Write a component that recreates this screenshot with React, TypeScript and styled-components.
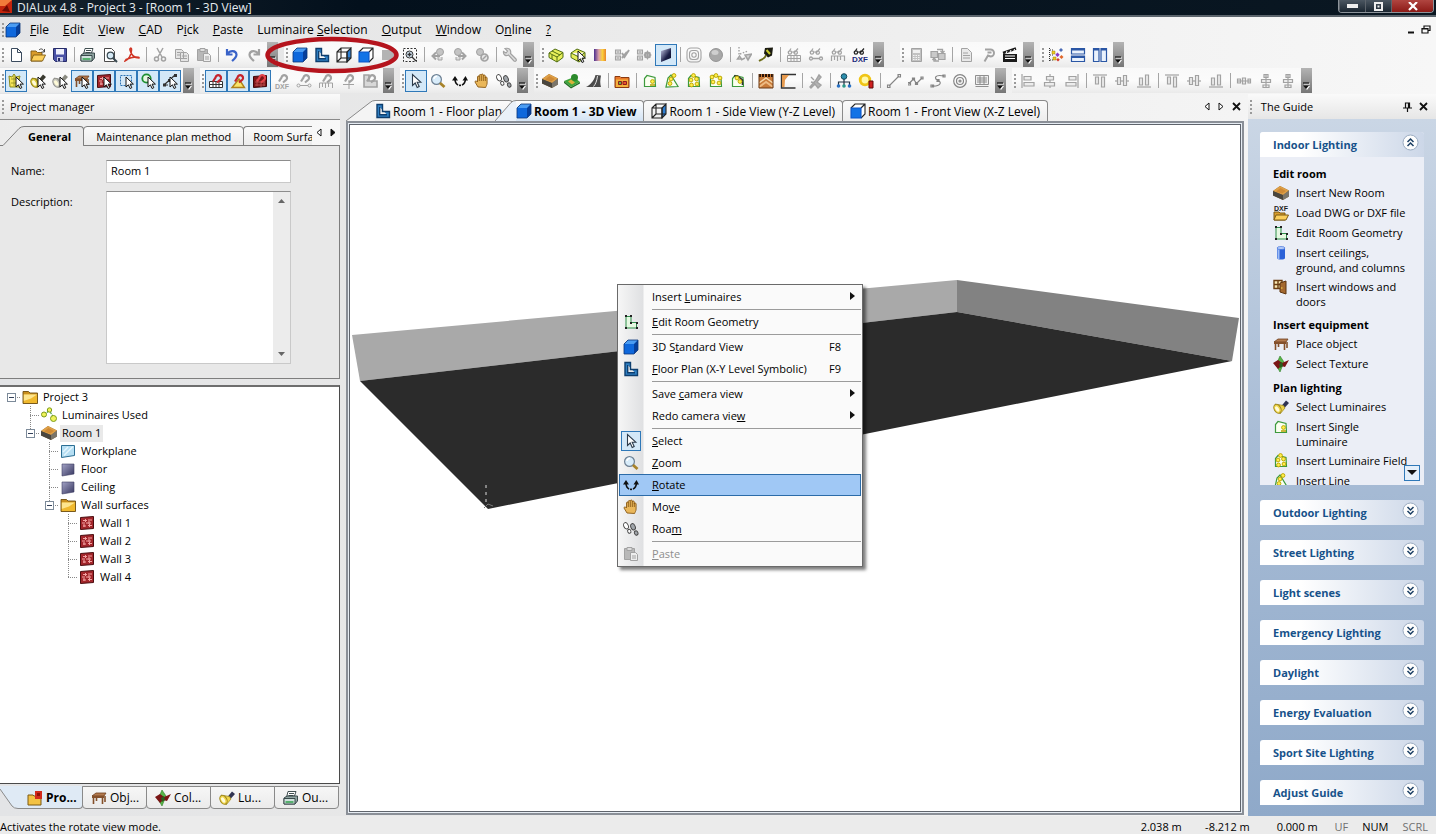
import React from "react";
import styled, { createGlobalStyle, css } from "styled-components";

const Global = createGlobalStyle`
  * { box-sizing: border-box; }
  body { margin: 0; background: #e8e8e8; }
  body, button, input, textarea {
    font-family: "Open Sans", "Noto Sans", sans-serif;
    font-size: 11px;
    line-height: 15px;
    color: #000;
  }
  button { padding: 0; border: 0; background: none; white-space: nowrap; }
  svg { display: block; flex: none; }
  u { text-underline-offset: 1px; }
`;

/* ---------- Icon drawings, all on a 16 x 16 grid ---------- */

const G = "#a2a2a2";
const GD = "#858585";

const cursor = (
  <path d="M8 4v10l2.4-2.2 1.7 3.7 1.7-.8-1.7-3.6H15.4z" fill="#fff" stroke="#111" strokeWidth="1" />
);
const glasses = (c: string) => (
  <path d="M2 6l3-4.500M8 6l4-4.500M2.200 5.500a1.700 1.700 0 1 0 3.400 0a1.700 1.700 0 1 0-3.400 0M8 5.500a1.700 1.700 0 1 0 3.400 0a1.700 1.700 0 1 0-3.400 0M5.600 5h2.400" fill="none" stroke={c} strokeWidth="1.200" />
);
const magnet = (c: string) => (
  <path d="M5 8.500L7.500 4.500A2.800 2.800 0 1 1 11.500 7.500L9 9.500" fill="none" stroke={c} strokeWidth="2.200" />
);
const smallText = (t: string, y: number, c: string, size = 7) => (
  <text x="8" y={y} fontSize={size} fontWeight="700" textAnchor="middle" fill={c} fontFamily="Liberation Sans, sans-serif">{t}</text>
);
const brick = (
  <g>
    <path d="M1.500 2.500l13-1v12l-13 1z" fill="#a3262b" stroke="#4b0d10" />
    <path d="M4 5.500h4M9 5h4M3 8h3M7 8h5M4 11h3M9 10.500h4M6.500 4v3M10 6v3M5 9v3M10.500 9v3" stroke="#f3a3a3" strokeWidth="1" />
  </g>
);
const table = (
  <g>
    <path d="M1 6l4-3h10l-2 3z" fill="#b37a4e" stroke="#6e3d1c" strokeWidth=".8" />
    <path d="M1 6h12v2H1z" fill="#84502b" />
    <path d="M2.500 8v6M11.500 8v6M5.500 8v3M14 6v6" stroke="#84502b" strokeWidth="1.600" />
  </g>
);
const torch = (body: string, head: string, rim: string) => (
  <g>
    <path d="M8 7.500L13 1.500l3 2.500-5.500 6z" fill={body} />
    <path d="M2 5l8.500 1.500 1.500 2.500-5 6z" fill={head} stroke={rim} strokeWidth=".7" />
    <ellipse cx="4.500" cy="9.800" rx="3.300" ry="4.700" transform="rotate(-30 4.500 9.800)" fill={head} stroke={rim} strokeWidth=".9" />
    <ellipse cx="4.200" cy="10" rx="1.700" ry="3" transform="rotate(-30 4.200 10)" fill="#fffbd8" />
  </g>
);
const room = (
  <g>
    <path d="M0 6l7-5 9 4.500v6L10 15 0 10.500z" fill="#8d6a38" />
    <path d="M0 6l7-5 9 4.500L10 10z" fill="#dfa048" />
    <path d="M3 6.500L7.500 3l5.500 3-4 2.500z" fill="#cf8a35" />
    <path d="M0 6l10 4v5L0 10.500z" fill="#4a463f" />
    <path d="M10 10l6-4.500v6L10 15z" fill="#7b756a" />
  </g>
);
const bulb = (x: number, y: number) => (
  <circle cx={x} cy={y} r="1.900" fill="#fff04a" stroke="#b9a100" strokeWidth=".9" />
);
const folder = (
  <g>
    <path d="M1 2.500h5.500L8 4h7.500v10.500H1z" fill="#c98f1e" />
    <path d="M1.500 5.500h13.500v8.500h-13.500z" fill="#f0b92e" />
    <path d="M1.500 5.500h13.500L9 9.500 1.500 12z" fill="#fde58e" />
    <path d="M1 2.500h5.500L8 4h7.500v10.500H1z" fill="none" stroke="#6d4e10" strokeWidth=".9" />
  </g>
);
const plan = (
  <path d="M2.500 13.500V5.500L5 2.500l8 2 .5 9z" fill="#fbfff0" stroke="#3d9a3d" strokeWidth="1.200" />
);
const glass = (c: string, f: string) => (
  <g>
    <circle cx="6.500" cy="6.500" r="4.900" fill={f} stroke={c} strokeWidth="1.200" />
    <path d="M4 6c0-2 2-3 3-2.500" fill="none" stroke="#fff" strokeWidth="1.500" />
    <path d="M10 10l4.500 4" stroke="#a8832a" strokeWidth="2.800" />
  </g>
);
const cubeSolid = (
  <g>
    <path d="M1 5l4-4h10v10l-4 4H1z" fill="#063f9c" />
    <path d="M1 5h10v10H1z" fill="#0f68dc" />
    <path d="M1 5l4-4h10l-4 4z" fill="#4b9cf2" />
    <path d="M1 5l4-4h10v10l-4 4H1z" fill="none" stroke="#0a3578" strokeWidth=".8" />
  </g>
);
const geo = (
  <g>
    <path d="M3 2.500h5v6h5.500v5.500H3z" fill="#e6f8e2" stroke="#2e8f4b" strokeWidth="1" />
    <path d="M2 1h2v2H2zM7 1h2v2H7zM7 8h2v2H7zM13 8h2v2h-2zM13 13h2v2h-2zM2 13h2v2H2z" fill="#222" />
  </g>
);
const texture = (
  <g>
    <path d="M7 0l4 6-4 10-4-7z" fill="#58b648" stroke="#2f7d26" strokeWidth=".6" />
    <path d="M0 7l5-3 4 3 7-3-4 7-4-1-3 3z" fill="#7a1515" />
    <path d="M6 8l3-2 1 4-3 2z" fill="#2b5d1e" />
  </g>
);
const check = (
  <path d="M1.500 3h5v4h-5zM1.500 9h5v4h-5zM3 5h2M3 11h2" fill="#d8d8d8" stroke={G} strokeWidth="1.100" />
);

const alignV = (mode: number) => {
  const line = mode === 0 ? "M2 1v14" : mode === 1 ? "M8 1v14" : "M14 1v14";
  const a = mode === 0 ? 4 : mode === 1 ? 4.5 : 5;
  const b = mode === 0 ? 4 : mode === 1 ? 2.5 : 2;
  return (
    <g fill="#ececec" stroke={G} strokeWidth="1.200">
      <path d={line} />
      <path d={`M${a} 3.500h7v3.500h-7zM${b} 9.500h10v3.500h-10z`} />
    </g>
  );
};
const alignH = (mode: number) => {
  const line = mode === 0 ? "M1 2h14" : mode === 1 ? "M1 8h14" : "M1 14h14";
  const a = mode === 0 ? 4 : mode === 1 ? 4.5 : 5;
  const b = mode === 0 ? 4 : mode === 1 ? 2.5 : 2;
  return (
    <g fill="#ececec" stroke={G} strokeWidth="1.200">
      <path d={line} />
      <path d={`M3.500 ${a}v7h3v-7zM9.500 ${b}v10h3v-10z`} />
    </g>
  );
};

const art: Record<string, React.ReactNode> = {
  cube: cubeSolid,
  new: <path d="M3.500 1.500h6l4 4v9h-10zM9.500 1.500v4h4" fill="#fff" stroke="#3b4b5e" />,
  open: (
    <g stroke="#7d5a13" strokeWidth=".9">
      <path d="M1 4h5l1.500 1.500H12V14H1z" fill="#d99c2b" />
      <path d="M3.500 8h12L12.500 14H1z" fill="#fbcf5b" />
      <path d="M9 3c2-2 4-1 5 1.500M14.500 2v3h-3" fill="none" stroke="#333" />
    </g>
  ),
  save: (
    <g>
      <path d="M1.500 1.500h13v13h-11l-2-2z" fill="#4a52a6" stroke="#272c68" />
      <path d="M4 2h8v5.500H4z" fill="#eef0fb" />
      <path d="M5 10h6v4.500H5z" fill="#c9cce4" />
      <path d="M6 11h2v3H6z" fill="#272c68" />
    </g>
  ),
  print: (
    <g stroke="#2d3c3e" strokeWidth=".9">
      <path d="M5 1.500h8l-2 6H3.500z" fill="#fff" />
      <path d="M1 8l3-2h10.500v5L12 14H1z" fill="#8ea3a0" />
      <path d="M1 8.500h11V14H1z" fill="#cfe0dc" />
      <path d="M2.500 12h8" stroke="#2ea04a" strokeWidth="1.500" />
      <path d="M6 3.500h5M5.500 5.500h5" />
    </g>
  ),
  preview: (
    <g>
      <path d="M2.500 1.500h7l3 3v10h-10z" fill="#fff" stroke="#4b4b4b" />
      <circle cx="8.500" cy="8.500" r="3.300" fill="#d5e9f5" stroke="#37474f" strokeWidth="1.200" />
      <path d="M11 11l4 4" stroke="#37474f" strokeWidth="2" />
    </g>
  ),
  pdf: <path d="M1 14c3-1 7-6 6.500-12c0-1.500-2-1-1.500 1C7 7 10 11 15 11c1-1-5-2.500-13 1.500z" fill="none" stroke="#d03526" strokeWidth="1.500" />,
  cut: <path d="M5 1l5 9M11 1L6 10M6.500 12a2 2 0 1 1-4 0a2 2 0 1 1 4 0M13.500 12a2 2 0 1 1-4 0a2 2 0 1 1 4 0" fill="none" stroke={G} strokeWidth="1.500" />,
  copy: <path d="M1.500 2.500h6l2 2v7h-8zM6.500 5.500h6l2 2v7h-8zM8 9h5M8 11.500h5M3 5.500h3M3 8h3" fill="#e4e4e4" stroke={G} />,
  paste: (
    <g stroke={G}>
      <path d="M1.500 2.500h10v11h-10z" fill="#b8b8b8" />
      <path d="M4 1.500h5v3H4z" fill="#ddd" />
      <path d="M7.500 6.500h5l2 2v6h-7zM9 10h4M9 12h4" fill="#eee" />
    </g>
  ),
  undo: <path d="M3 2v5.500h5.500M3.500 7C6 3 12 3 12.500 7.500c0 3-2 4.500-4.500 6.500" fill="none" stroke="#3a63c8" strokeWidth="2.200" />,
  redo: <path d="M13 2v5.500H7.500M12.500 7C10 3 4 3 3.500 7.500c0 3 2 4.500 4.500 6.500" fill="none" stroke={G} strokeWidth="2.200" />,
  plan: (
    <path d="M2 1.500h5.500v7h7v6H2zM4.700 4v7.700H12" fill="#2f7fc2" stroke="#0e3e6e" strokeWidth="1.400" />
  ),
  wire: (
    <g stroke="#222" strokeWidth="1.100" fill="none">
      <path d="M11 5l4-4v10l-4 4z" fill="#2f7fd2" />
      <path d="M1 5h10v10H1zM1 5l4-4h10M5 1v10h10M5 11l-4 4" />
    </g>
  ),
  front: (
    <g stroke="#222" strokeWidth="1.100" fill="none">
      <path d="M1 5l4-4h10v10l-4 4M11 5l4-4" fill="#fff" />
      <path d="M1 5h10v10H1z" fill="#1273e6" stroke="#0b55c6" />
    </g>
  ),
  dim: <path d="M2 3h9l4 5-4 5H2z" fill="#b3b3b3" />,
  zoomwin: (
    <g>
      <path d="M1.500 1.500h13v13h-13z" fill="none" stroke="#333" strokeDasharray="2 1.500" />
      <circle cx="7.500" cy="7.500" r="3.500" fill="#cfe0ee" stroke="#333" />
      <path d="M10 10l4 4M5.500 7.500h4M7.500 5.500v4" stroke="#333" strokeWidth="1.300" />
    </g>
  ),
  camL: (
    <g fill="none" stroke={G}>
      <circle cx="10" cy="5" r="3.500" fill="#c4c4c4" />
      <path d="M10 9H3M6 5.500L2.500 9 6 12.500" strokeWidth="2" /><path d="M8 10v3h4v-3" fill="#ddd" />
    </g>
  ),
  camR: (
    <g fill="none" stroke={G}>
      <circle cx="6" cy="5" r="3.500" fill="#c4c4c4" />
      <path d="M6 9h7M10 5.500L13.500 9 10 12.500" strokeWidth="2" /><path d="M4 10v3h4v-3" fill="#ddd" />
    </g>
  ),
  camB: (
    <g fill="none" stroke={G}>
      <circle cx="6" cy="5" r="3.500" fill="#c4c4c4" />
      <circle cx="10.500" cy="10.500" r="3.500" fill="#e4e4e4" strokeWidth="1.700" /><path d="M8.500 12.500l4-4" strokeWidth="1.500" />
    </g>
  ),
  wrench: <path d="M3 1.500L5.500 4 4 6 1.500 4.500C1 8 4 9.500 6.500 8L12 14c1.500 1 3-.5 2-2L8.500 6.500C9.500 3 7 .5 3 1.500z" fill="#ddd" stroke={G} strokeWidth="1.200" />,
  ybox: (
    <g stroke="#4f6d12" strokeWidth="1">
      <path d="M1 6l6-4 8 3.500v5L9 15l-8-4.500z" fill="#e7ef5a" />
      <path d="M1 6l8 4 6-4.500M9 10v5M4 4l8 4M4 8v4" fill="none" />
    </g>
  ),
  yboxsel: (
    <g>
      <path d="M1 6l6-4 8 3.500v5L9 15l-8-4.500zM1 6l8 4 6-4.500" fill="#e7ef5a" stroke="#4f6d12" />
      {cursor}
    </g>
  ),
  spectrum: <path d="M2 2h12v12H2z" fill="url(#spectrumFill)" />,
  chkpen: <g>{check}<path d="M8 6l2.500 4L15 3M8 11l5-6" fill="none" stroke={G} strokeWidth="2" /></g>,
  chkgear: <g>{check}<circle cx="11.500" cy="8" r="2.500" fill="none" stroke={G} strokeWidth="2" /><path d="M11.500 3.500v9M7.500 8h8M8.800 5.200l5.400 5.600M14.200 5.200l-5.400 5.600" stroke={G} /></g>,
  slab: <path d="M3 4l10-3v10L3 15z" fill="url(#slabFill)" />,
  contours: (
    <g fill="none" stroke={G} strokeWidth="1.100">
      <rect x="1" y="1" width="14" height="14" rx="4" />
      <rect x="3.500" y="3.500" width="9" height="9" rx="3" />
      <circle cx="8" cy="8" r="2.200" />
    </g>
  ),
  sphere: (
    <g>
      <circle cx="8" cy="8" r="6.500" fill="#a8a8a8" stroke={GD} strokeWidth=".8" />
      <ellipse cx="7" cy="5.500" rx="3.500" ry="2.500" fill="#cfcfcf" />
    </g>
  ),
  points: (
    <g fill="none" stroke={G}>
      <path d="M3 0v9M4 7l8-3" strokeDasharray="1.500 1.500" strokeWidth="1.400" />
      <path d="M1.500 12h4l-2-3zM5 13l4-2" strokeWidth="1.500" />
      <path d="M9 8l3 5 3.500-6z" fill="#d2d2d2" strokeWidth="1.500" />
    </g>
  ),
  lamp: (
    <g>
      <path d="M7 1l8-.5-1 8-4 2-4-4z" fill="#1c1c12" />
      <path d="M8.500 3l3.500 4" stroke="#c6c92b" strokeWidth="2" />
      <path d="M8 8c-1 4-4 4-7 6" fill="none" stroke="#6d6d18" strokeWidth="1.700" />
    </g>
  ),
  gltable: <g>{glasses(G)}<path d="M1.500 8.500h13v6h-13zM1.500 11.500h13M5 8.500v6M8 8.500v6M11 8.500v6" fill="none" stroke={G} /></g>,
  glline: <g>{glasses(G)}<path d="M4 11.500h8M4.500 11.500a1.500 1.500 0 1 1-3 0a1.500 1.500 0 1 1 3 0M14.500 11.500a1.500 1.500 0 1 1-3 0a1.500 1.500 0 1 1 3 0" fill="none" stroke={G} strokeWidth="1.300" /></g>,
  glruler: <g>{glasses(G)}<path d="M1.500 14V9h13v5M4.500 9v4M7.500 9v5M10.500 9v4" fill="none" stroke={G} strokeWidth="1.200" /></g>,
  gldxf: <g>{glasses("#222")}{smallText("DXF", 15, "#1c2a7a", 8)}</g>,
  calc: (
    <g>
      <path d="M3.500 1.500h10v13h-10z" fill="#c2c2c2" stroke={G} />
      <path d="M5 3h7v3H5z" fill="#f1f1f1" />
      <path d="M5 8.500h7M5 10.500h7M5 12.500h7" stroke="#f4f4f4" strokeDasharray="1.500 1" />
    </g>
  ),
  exchange: (
    <g fill="#c9c9c9" stroke={G}>
      <path d="M1 4.500h6.500v6H1zM8.500 6.500H15v6H8.500z" strokeWidth="1.200" />
      <path d="M7 2.500h5.500V5M10.500 4l2 2 2-2M9 14H4v-2.500M2.500 13L4 11l2 2" fill="none" strokeWidth="1.300" />
    </g>
  ),
  doc: <path d="M3.500 1.500h6l4 4v9h-10zM5 6h5M5 8.500h7M5 11h7" fill="#e9e9e9" stroke={G} />,
  pin: <path d="M5 2.500h5.500a3.500 3.500 0 0 1 0 7L8 8.500 4.500 14.500M7.500 5.500h4" fill="none" stroke={G} strokeWidth="2" />,
  clapper: (
    <g>
      <path d="M1 7h14v8H1z" fill="#1a1a1a" />
      <path d="M1 6l13-4.500" stroke="#1a1a1a" strokeWidth="2.600" />
      <path d="M3 9h10M3 11.500h10M4 6.500l1-2.500M8 5l1-2M12 4l.5-2" stroke="#fff" strokeWidth="1" />
    </g>
  ),
  treeview: (
    <g>
      <path d="M1.500 1v13M2 3h3M2 8h3M2 13h4" fill="none" stroke="#333" strokeDasharray="1 1" />
      <path d="M4 4h3v3H4zM5 10h3v3H5z" fill="#f0cc1c" stroke="#9a7d0a" strokeWidth=".5" />
      <path d="M13 1l2 2-2 2-2-2z" fill="#4b6bb5" />
      <path d="M9.500 5.500l2.200 2.200-2.200 2.200-2.200-2.200z" fill="#8a3ac4" />
      <path d="M13.500 8l2 2-2 2-2-2z" fill="#e0662a" />
      <path d="M10 11l1.800 1.800L10 14.600 8.200 12.800z" fill="#d43a2a" />
    </g>
  ),
  hsplit: <g><path d="M1.500 1.500h13v5.500h-13zM1.500 9h13v5.500h-13z" fill="#eaf2fc" stroke="#2b57a5" strokeWidth="1.200" /><path d="M1.500 2.500h13M1.500 10h13" stroke="#2b57a5" strokeWidth="2.200" /></g>,
  vsplit: <g><path d="M1.500 1.500h5.500v13H1.500zM9 1.500h5.500v13H9z" fill="#eaf2fc" stroke="#2b57a5" strokeWidth="1.200" /><path d="M1.500 2.500h5.500M9 2.500h5.500" stroke="#2b57a5" strokeWidth="2.200" /></g>,

  selLum: <g><path d="M1 3l3 1 2-3 2 3 4-1-1 4 1 7H2z" fill="#f6e65a" stroke="#8a8a20" /><path d="M3 6h8M3 10h8M6 3v10" stroke="#8a8a20" strokeWidth=".8" />{cursor}</g>,
  selTorch: <g>{torch("#3a3a30", "#d9c83a", "#8a7a18")}{cursor}</g>,
  selTorchGrey: <g>{torch("#8a8a80", "#c6c6bd", "#8e8e88")}{cursor}</g>,
  selTable: <g>{table}{cursor}</g>,
  selBrick: <g>{brick}{cursor}</g>,
  selArea: <g><path d="M2.500 2.500h11v10h-11z" fill="none" stroke="#2a72b5" strokeDasharray="2 1" />{cursor}</g>,
  selRound: <g><circle cx="6.500" cy="5.500" r="4.200" fill="#e6f8e2" stroke="#1e8e32" strokeWidth="1.800" />{cursor}</g>,
  selLine: <g><path d="M2 12L13 2M2 12h4" stroke="#333" strokeWidth="1.200" /><path d="M1 10.500h3v3H1zM12 1h3v3h-3zM6 6h3v3H6z" fill="#333" />{cursor}</g>,

  magGrid: <g><path d="M1.500 8.500h13v6h-13zM1.500 11.500h13M5 8.500v6M8 8.500v6M11 8.500v6" fill="#fff" stroke="#333" />{magnet("#c6242c")}</g>,
  magAngle: <g><path d="M2 14.500h12.500L9 6z" fill="#fae56a" stroke="#b0801a" strokeWidth="1.400" />{magnet("#c6242c")}</g>,
  magBrick: <g><path d="M1.500 3.500l13-1v11l-13 1z" fill="#7d1418" stroke="#3b0709" /><path d="M3 9h10M3 12h10M5 6v7M9 9v5M12 6v7" stroke="#b34a4a" />{magnet("#e2434a")}</g>,
  magDxf: <g>{magnet(G)}{smallText("DXF", 15.5, G, 7)}</g>,
  magLine: <g>{magnet(G)}<path d="M4 12.500h8M4 12.500a1.500 1.500 0 1 1-3 0a1.500 1.500 0 1 1 3 0M15 12.500a1.500 1.500 0 1 1-3 0a1.500 1.500 0 1 1 3 0" fill="none" stroke={G} /></g>,
  magRuler: <g>{magnet(G)}<path d="M1.500 15v-5h13v5M4.500 10v4M7.500 10v5M10.500 10v4" fill="none" stroke={G} /></g>,
  magCross: <g>{magnet(G)}<path d="M9 7v9M3 11.500h11" stroke={G} /></g>,
  magRoom: <g><path d="M2 2h5v6h8v6H2z" fill="#d8d8d8" stroke={G} strokeWidth="1.600" />{magnet(G)}</g>,

  cursor: <path d="M4.500 1.500v11l2.700-2.500 2 4.500 2-1-2-4.300h3.600z" fill="#fff" stroke="#2b3a4a" strokeWidth="1.100" />,
  zoom: glass("#6c7f92", "#d8ecfa"),
  rotate: (
    <g>
      <path d="M3 6c0 8.500 10 8.500 10.500 0" fill="none" stroke="#111" strokeWidth="1.600" strokeDasharray="7 1 2 1 9" />
      <path d="M0 7.500L3 3l3 4.500zM10.500 7.500L13.500 3l2.500 4.500z" fill="#111" />
    </g>
  ),
  hand: (
    <path d="M4 14L1 9c0-1.500 1.500-1.500 2.500 0V4c0-1.300 1.800-1.300 1.800 0V2.500c0-1.300 2-1.300 2 0V2c0-1.300 2-1.300 2 0v1c0-1.300 2-1.300 2 0v2c0-1.300 1.800-1.300 1.800 0V10c0 2-1 3-1.500 4.500zM5.300 4v4M7.300 3v5M9.300 3v5M11.300 4v4" fill="#eab75a" stroke="#8a5a16" strokeWidth=".9" />
  ),
  feet: (
    <g stroke="#444" strokeWidth=".9">
      <ellipse cx="3" cy="4.800" rx="2.200" ry="3.300" fill="#fff" transform="rotate(-25 3 4.800)" />
      <ellipse cx="6.300" cy="10.300" rx="1.600" ry="2" fill="#fff" transform="rotate(-25 6.300 10.300)" />
      <ellipse cx="10" cy="5.800" rx="2.200" ry="3.300" fill="#a0a5aa" transform="rotate(-25 10 5.800)" />
      <ellipse cx="13.200" cy="12" rx="1.700" ry="2.200" fill="#a0a5aa" transform="rotate(-25 13.200 12)" />
    </g>
  ),
  room,
  terrain: (
    <g>
      <path d="M0 8l7 6 9-5-6-5z" fill="#3da63d" />
      <path d="M0 8l7 6v1.500L0 10zM7 14l9-5v1.500l-9 5z" fill="#236d23" />
      <circle cx="10.500" cy="4.500" r="3.500" fill="#2c8a2c" />
      <path d="M4 8.500l4 3 3-2-4-3z" fill="#d9b23a" />
    </g>
  ),
  road: <g><path d="M0 14C4 12 8 8 9.500 2L15 2.500c-1 5-1 8 0 11.500z" fill="#4b4b4b" /><path d="M7.500 13.500c2-2 3.500-6 4-10.500" fill="none" stroke="#e5e5e5" strokeWidth="1" /></g>,
  dxfroom: <g><path d="M1 3.500h5l1 1H15v10H1z" fill="#e8782a" stroke="#8a3a10" /><path d="M2 6.500h12V14H2z" fill="#f3b13c" /><path d="M4.500 8.500h3v3h-3z" fill="#58b648" stroke="#8c1c20" /><path d="M9 8.500h3.500v3H9z" fill="#e8552a" stroke="#8c1c20" /></g>,
  lumOne: <g>{plan}{bulb(10.500, 8.500)}<path d="M8 12h5" stroke="#b9a100" strokeWidth="1.500" /></g>,
  lumLine: <g><path d="M2 14L4 5l3-3 7 11.500z" fill="#fbfff0" stroke="#3d9a3d" strokeWidth="1.200" />{bulb(6, 10.500)}{bulb(7, 6)}{bulb(10, 2.500)}</g>,
  lumField: <g>{plan}{bulb(5, 7)}{bulb(10.500, 6)}{bulb(5.500, 12)}{bulb(11, 11)}{bulb(7.500, 2.500)}</g>,
  lumCircle: <g>{plan}{bulb(4, 4)}{bulb(8, 2.500)}{bulb(12, 5)}{bulb(5, 9)}{bulb(11, 10)}</g>,
  lumRoom: <g>{plan}<path d="M4 3h3.500l5 4v5" fill="none" stroke="#333" strokeWidth="1.600" />{bulb(7, 5)}{bulb(10, 8.500)}</g>,
  pattern: <g><path d="M1 1h14v14H1z" fill="#c97b3a" /><path d="M1 14l7-5 7 5" fill="none" stroke="#eebb83" strokeWidth="2" /><path d="M1 10l7-5 7 5" fill="none" stroke="#f6d9ae" strokeWidth="1.500" /><path d="M1 2.500h14" stroke="#2b1508" strokeDasharray="2 1" strokeWidth="3" /><path d="M1 1v14h14V1" fill="none" stroke="#6b3a16" /></g>,
  corner: <g><path d="M1 1.500h15M1.500 1v14h14" fill="none" stroke="#333" strokeWidth="1.400" /><path d="M2 2h7L5 7l-.500 7H2z" fill="#e69a4e" /></g>,
  spray: <path d="M2 14l6-7 3-5 2 2-4 5 4 3-3 3-3-4-4 4zM3 4l3 3M3 9l4 1" fill="#b4b4b4" stroke={G} strokeWidth="1.400" />,
  network: <g><path d="M8 5v4M2.500 12V9h11v3M8 9v3" fill="none" stroke="#234" strokeWidth="1.200" /><circle cx="8" cy="3.500" r="2.800" fill="#2d8fae" stroke="#15485a" /><circle cx="2.500" cy="13" r="1.800" fill="#2a72c5" /><circle cx="8" cy="13" r="1.800" fill="#2a9a8a" /><circle cx="13.500" cy="13" r="1.800" fill="#2a72c5" /></g>,
  lightlock: <g><circle cx="7" cy="7" r="4.800" fill="#fff9a8" stroke="#f0c516" strokeWidth="2.800" /><path d="M11 8h4v7h-4z" fill="#cf2020" stroke="#5e0b0b" /></g>,
  line: <path d="M3 13L13 3M1.500 12h2.500v2.500H1.500zM12 1.500h2.500V4H12z" fill="#eee" stroke={GD} strokeWidth="1.100" />,
  polyline: <path d="M1 10.500l4.500-4.500 3 4.500L14 5M0 9.500h2.500V12H0zM4.500 5h2v2h-2zM7.500 9.500h2v2h-2zM13 4h2v2h-2z" fill="none" stroke={GD} strokeWidth="1.200" />,
  spline: <path d="M14 3C4 1 4 6 8 7.500s3 6-6 5.500M13 2h2v2h-2zM7 6.500h2v2H7zM1 12h2.500v2H1z" fill="none" stroke={GD} strokeWidth="1.200" />,
  circle: <g fill="none" stroke={GD} strokeWidth="1.200"><circle cx="8" cy="8" r="6.300" /><circle cx="8" cy="8" r="3.500" /><circle cx="8" cy="8" r="1" /></g>,
  note: <path d="M1.500 2.500h13v9h-13zM3 5h10M3 7h10M3 9h10M6 3v8M10 3v8M1.500 13.500h13" fill="#eee" stroke={GD} strokeWidth=".9" />,
  av0: alignV(0), av1: alignV(1), av2: alignV(2),
  ah0: alignH(0), ah1: alignH(1), ah2: alignH(2),
  distH: <path d="M1 8h14M1.500 6h3v4h-3zM6.500 5h3v6h-3zM12 6h2.500v4H12z" fill="#ececec" stroke={G} strokeWidth="1.200" />,
  distV: <path d="M8 1v14M6 1.500h4v3H6zM3.500 6.500h9v3h-9zM5 12h6v2.500H5z" fill="#ececec" stroke={G} strokeWidth="1.200" />,

  geo, texture, table, torch: torch("#2f3352", "#efd447", "#9a8420"), folder, brick,
  dxffile: <g><path d="M1 7h5l1 1h5v7H1z" fill="#d99c2b" stroke="#7d5a13" /><path d="M3 10h12.500L13 15H1z" fill="#fbcf5b" stroke="#7d5a13" />{smallText("DXF", 6, "#222", 7)}</g>,
  column: <g><path d="M4 3v10c0 2 8 2 8 0V3z" fill="#2c62d8" /><path d="M5.500 3v11" stroke="#9dbcf6" strokeWidth="2" /><ellipse cx="8" cy="3" rx="4" ry="1.500" fill="#b7cdf8" stroke="#2c62d8" strokeWidth=".6" /></g>,
  window: <g><path d="M1 1.500h8v8H1zM5 1.500v8M1 5.500h8" fill="#f8e7b2" stroke="#6a3d12" strokeWidth="1.400" /><path d="M7 4l6-2v13l-6-2z" fill="#a4692f" stroke="#5d3510" /><circle cx="8.800" cy="9" r=".8" fill="#f6d34c" /></g>,
  lums: <g><path d="M4 8L8 3l5 8" fill="none" stroke="#3d9a3d" strokeDasharray="2 1" strokeWidth="1.200" /><circle cx="3" cy="7.500" r="2.500" fill="#eff35a" stroke="#7d9a1a" /><circle cx="8.500" cy="3" r="2.200" fill="#eff35a" stroke="#7d9a1a" /><circle cx="12.500" cy="11.500" r="3" fill="#eff35a" stroke="#7d9a1a" /></g>,
  workplane: <g><path d="M1.500 2.500h13v10l-13 2z" fill="#b5def3" stroke="#2c6f94" /><path d="M4 12.500l9-9M3 9l5-5" stroke="#e4f5fd" strokeWidth="1.500" /></g>,
  surface: <path d="M2 3h12v10L2 15z" fill="url(#surfaceFill)" stroke="#3d3d63" strokeWidth=".6" />,
  project: <g><path d="M1 5h5l1 1h7v9H1z" fill="#f3c244" stroke="#7d5a13" /><path d="M8 1h7v8H8z" fill="#d22a1c" /><path d="M10 3h3v3h-3z" fill="#8f120a" /></g>,
};

const Icon = ({ name }: { name: string }) => (
  <svg width="16" height="16" viewBox="0 0 16 16" aria-hidden="true">{art[name]}</svg>
);

const Gradients = () => (
  <svg width="0" height="0" aria-hidden="true">
    <defs>
      <linearGradient id="surfaceFill" x1="0" y1="0" x2="1" y2="1">
        <stop offset="0" stopColor="#a3a3c6" />
        <stop offset="1" stopColor="#36365f" />
      </linearGradient>
      <linearGradient id="slabFill" x1="0" y1="0" x2="1" y2="1">
        <stop offset="0" stopColor="#c8cbe8" />
        <stop offset=".6" stopColor="#1c2048" />
        <stop offset="1" stopColor="#080b22" />
      </linearGradient>
      <linearGradient id="spectrumFill" x1="0" y1="0" x2="1" y2="0">
        <stop offset="0" stopColor="#4a2c8c" />
        <stop offset=".4" stopColor="#d9a0a8" />
        <stop offset=".7" stopColor="#fbd03c" />
        <stop offset="1" stopColor="#e8842a" />
      </linearGradient>
    </defs>
  </svg>
);

/* ---------- Frame ---------- */

const Window = styled.div`
  position: relative;
  display: flex;
  flex-direction: column;
  height: 100vh;
  min-height: 640px;
  overflow: hidden;
  background: linear-gradient(90deg, #e3e4e6, #e8e8e8 30%, #f7f7f7);
`;

const TitleBar = styled.header`
  display: flex;
  align-items: flex-start;
  justify-content: space-between;
  height: 17px;
  flex: none;
  background: linear-gradient(90deg, #15222d, #03101c 25%, #0a1722);
  border-bottom: 2px solid #5b646c;
  color: #e6ebef;
`;

const TitleText = styled.div`
  display: flex;
  gap: 5px;
  font-size: 12px;
`;

const WindowButtons = styled.div`
  display: flex;
  margin-right: 2px;
  border: 1px solid #8d949b;
  border-top: 0;
  border-radius: 0 0 4px 4px;
  overflow: hidden;
`;

const WindowButton = styled.button<{ $close?: boolean }>`
  display: flex;
  align-items: center;
  justify-content: center;
  width: ${(p) => (p.$close ? 42 : 26)}px;
  height: 12px;
  border-left: 1px solid #5c636b;
  background: ${(p) => (p.$close ? "linear-gradient(#b04540, #8c1a16)" : "linear-gradient(#4b5661, #1a2530)")};
`;

const MenuBar = styled.nav`
  display: flex;
  align-items: center;
  height: 25px;
  flex: none;
  padding-right: 5px;
`;

const MenuLogo = styled.span`
  width: 18px;
`;

const MenuButton = styled.button`
  padding: 0 7px;
  font-size: 12px;
`;

const MdiButtons = styled.div`
  display: flex;
  gap: 5px;
  margin-left: auto;
`;

const ToolRow = styled.div`
  display: flex;
  gap: 6px;
  height: 26px;
  flex: none;
`;

const ToolGroup = styled.div<{ $apart?: boolean }>`
  display: flex;
  align-items: center;
  height: 25px;
  margin-left: ${(p) => (p.$apart ? 10 : 0)}px;
  background: linear-gradient(#f9f9f9, #fbfbfb 50%, #eaeaea);
`;

const Grip = styled.span`
  width: 5px;
  height: 16px;
  flex: none;
  background: radial-gradient(circle at 3px 2px, #9a9a9a 1px, transparent 1px) 0 0 / 5px 4px;
`;

const ToolButton = styled.button<{ $on?: boolean }>`
  display: flex;
  align-items: center;
  justify-content: center;
  width: 22px;
  height: 22px;
  flex: none;
  ${(p) => p.$on && css`
    background: #d3e8f8;
    border: 1px solid #2f78b8;
  `}
`;

const Divider = styled.span`
  width: 6px;
  height: 15px;
  flex: none;
  background: linear-gradient(#a5a5a5, #a5a5a5) center / 1px 100% no-repeat;
`;

const Overflow = styled.button`
  display: flex;
  align-items: flex-end;
  justify-content: center;
  width: 11px;
  height: 25px;
  margin-left: 2px;
  padding-bottom: 3px;
  background: linear-gradient(#b4b4b4, #767676);
`;

const Highlight = styled.svg`
  position: absolute;
  left: 264px;
  top: 35px;
  pointer-events: none;
`;

type Group = { items: string; apart?: boolean };

/* "|" is a divider and a leading "*" marks a pressed button. */
const rowOne: Group[] = [
  { items: "new open save | print preview pdf | cut copy paste | undo redo" },
  { items: "cube plan wire front dim zoomwin | camL camR camB | wrench" },
  { items: "ybox yboxsel spectrum chkpen chkgear *slab | contours sphere | points lamp | gltable glline glruler gldxf" },
  { items: "calc exchange | doc pin clapper", apart: true },
  { items: "treeview hsplit vsplit" },
];
const rowTwo: Group[] = [
  { items: "*selLum selTorch selTorchGrey *selTable *selBrick *selArea *selRound *selLine" },
  { items: "*magGrid *magAngle *magBrick magDxf magLine magRuler magCross magRoom" },
  { items: "*cursor zoom rotate hand feet" },
  { items: "room terrain road | dxfroom | lumOne lumLine lumField lumCircle lumRoom | pattern corner | spray | network lightlock | line polyline spline circle note" },
  { items: "av0 av1 av2 | ah0 ah1 ah2 | ah0 ah1 ah2 | distH distV distV" },
];

const Tools = ({ groups }: { groups: Group[] }) => (
  <ToolRow role="toolbar">
    {groups.map((g, i) => (
      <ToolGroup key={i} $apart={g.apart}>
        <Grip />
        {g.items.split(" ").map((t, j) =>
          t === "|" ? <Divider key={j} /> : (
            <ToolButton key={j} $on={t[0] === "*"} aria-label={t.replace("*", "")}>
              <Icon name={t.replace("*", "")} />
            </ToolButton>
          )
        )}
        <Overflow aria-label="More buttons">
          <svg width="7" height="8" viewBox="0 0 7 8">
            <path d="M1 2h6" stroke="#fff" /><path d="M0 1h6" stroke="#111" strokeWidth="1.200" />
            <path d="M1 4h6L4 8z" fill="#fff" /><path d="M0 3.500h6L3 7z" fill="#111" />
          </svg>
        </Overflow>
      </ToolGroup>
    ))}
  </ToolRow>
);

const Body = styled.main`
  display: flex;
  flex: 1;
  min-height: 0;
`;

/* ---------- Left column ---------- */

const LeftPanel = styled.section`
  display: flex;
  flex-direction: column;
  width: 340px;
  flex: none;
  margin-right: 6px;
`;

const PanelHeader = styled.div`
  display: flex;
  align-items: center;
  gap: 5px;
  height: 25px;
  flex: none;
  background: linear-gradient(#fafafa, #e6e6e6);
`;

const FormTabs = styled.div`
  display: flex;
  align-items: flex-end;
  height: 27px;
  flex: none;
  border-top: 1px solid #8a8a8a;
  background: linear-gradient(90deg, #ececec, #f8f8f8);
  overflow: hidden;
`;

const FormTab = styled.button<{ $on?: boolean; $grow?: boolean }>`
  height: 20px;
  padding: 0 12px;
  border: 1px solid #7e7e7e;
  border-left-width: ${(p) => (p.$on ? 0 : 1)}px;
  border-bottom-color: ${(p) => (p.$on ? "#e8e8e8" : "#7e7e7e")};
  border-right-width: ${(p) => (p.$grow ? 0 : 1)}px;
  border-radius: ${(p) => (p.$on ? "0 4px 0 0" : "4px 4px 0 0")};
  margin-left: ${(p) => (p.$on ? 0 : -1)}px;
  background: ${(p) => (p.$on ? "#e8e8e8" : "linear-gradient(#fafafa, #ececec)")};
  font-weight: ${(p) => (p.$on ? 700 : 400)};
  ${(p) => p.$on && css`padding: 0 12px 0 4px;`}
  ${(p) => p.$grow && css`
    flex: 1;
    min-width: 0;
    overflow: hidden;
    border-radius: 4px 0 0 0;
    text-align: left;
    padding: 0 0 0 9px;
  `}
`;

const TabArrows = styled.div`
  display: flex;
  align-items: center;
  gap: 8px;
  height: 20px;
  padding: 0 4px 6px;
  border-bottom: 1px solid #7e7e7e;
`;

const Form = styled.form`
  display: grid;
  grid-template-columns: 95px 185px;
  grid-template-rows: 23px 1fr;
  row-gap: 8px;
  height: 233px;
  flex: none;
  padding: 14px 0 14px 11px;
  border-right: 1px solid #7e7e7e;
  border-bottom: 1px solid #7e7e7e;
  background: #e8e8e8;
`;

const Label = styled.label`
  padding-top: 3px;
`;

const Field = styled.input`
  height: 23px;
  padding: 0 4px 2px;
  border: 1px solid #c9c9c9;
  border-top-color: #8d8d8d;
  background: #fff;
`;

const AreaBox = styled.div`
  display: flex;
  border: 1px solid #c9c9c9;
  border-top-color: #8d8d8d;
  background: #fff;
`;

const Area = styled.textarea`
  flex: 1;
  min-width: 0;
  border: 0;
  resize: none;
  overflow: hidden;
`;

const Scroll = styled.div`
  display: flex;
  flex-direction: column;
  align-items: center;
  justify-content: space-between;
  width: 17px;
  padding: 4px 0;
  background: #ececec;
`;

const Tree = styled.ul`
  flex: 1;
  min-height: 0;
  margin: 6px 0 0;
  padding: 1px 2px;
  border: 1px solid #4a4a4a;
  border-top: 2px solid #6e6e6e;
  border-left: 0;
  background: #fff;
  list-style: none;
`;

const TreeRow = styled.li`
  display: flex;
  align-items: center;
  height: 18px;
`;

const Blank = styled.span<{ $n: number }>`
  width: ${(p) => p.$n * 19}px;
`;

const Branch = styled.span<{ $last?: boolean; $root?: boolean }>`
  display: flex;
  align-items: center;
  justify-content: center;
  width: 19px;
  height: 18px;
  margin-right: 1px;
  background:
    repeating-linear-gradient(90deg, #888 0 1px, transparent 1px 2px) 9px 9px / 10px 1px no-repeat,
    repeating-linear-gradient(#888 0 1px, transparent 1px 2px) 9px 0 / 1px ${(p) => (p.$root ? "0" : p.$last ? "9px" : "18px")} no-repeat;
`;

const Expander = styled.button`
  width: 9px;
  height: 9px;
  border: 1px solid #7c8a99;
  background: linear-gradient(#33415a, #33415a) center / 5px 1px no-repeat #fff;
`;

const NodeLabel = styled.span<{ $on?: boolean }>`
  margin-left: 3px;
  padding: 0 2px 2px;
  background: ${(p) => (p.$on ? "#e9e9e9" : "none")};
`;

const BottomTabs = styled.div`
  display: flex;
  height: 23px;
  flex: none;
  margin: 2px 0 7px;
`;

const BottomTab = styled.button<{ $on?: boolean }>`
  display: flex;
  align-items: center;
  gap: 3px;
  width: ${(p) => (p.$on ? 65 : 65)}px;
  height: 23px;
  margin-left: ${(p) => (p.$on ? 0 : -1)}px;
  padding-left: ${(p) => (p.$on ? 9 : 8)}px;
  border: 1px solid #8a8a8a;
  border-left-width: ${(p) => (p.$on ? 0 : 1)}px;
  border-top-color: ${(p) => (p.$on ? "#dfeaf5" : "#8a8a8a")};
  border-radius: 0 0 4px ${(p) => (p.$on ? 0 : 4)}px;
  background: ${(p) => (p.$on ? "#dfeaf5" : "linear-gradient(#f6f6f6, #ebebeb)")};
  font-size: 12px;
  font-weight: ${(p) => (p.$on ? 700 : 400)};
`;

type Node = { depth: number; icon: string; label: string; open?: boolean; last?: boolean; on?: boolean };
const nodes: Node[] = [
  { depth: 0, icon: "folder", label: "Project 3", open: true },
  { depth: 1, icon: "lums", label: "Luminaires Used" },
  { depth: 1, icon: "room", label: "Room 1", open: true, last: true, on: true },
  { depth: 2, icon: "workplane", label: "Workplane" },
  { depth: 2, icon: "surface", label: "Floor" },
  { depth: 2, icon: "surface", label: "Ceiling" },
  { depth: 2, icon: "folder", label: "Wall surfaces", open: true, last: true },
  { depth: 3, icon: "brick", label: "Wall 1" },
  { depth: 3, icon: "brick", label: "Wall 2" },
  { depth: 3, icon: "brick", label: "Wall 3" },
  { depth: 3, icon: "brick", label: "Wall 4", last: true },
];

const LeftArrow = () => (
  <svg width="6" height="9" viewBox="0 0 6 9"><path d="M5 1v7L1 4.500z" fill="#fff" stroke="#111" /></svg>
);
const RightArrow = ({ solid }: { solid?: boolean }) => (
  <svg width="6" height="9" viewBox="0 0 6 9"><path d="M1 1v7l4-3.500z" fill={solid ? "#111" : "#fff"} stroke="#111" /></svg>
);
const CloseMark = () => (
  <svg width="9" height="9" viewBox="0 0 9 9"><path d="M1 1l7 7M8 1L1 8" stroke="#111" strokeWidth="1.800" /></svg>
);

const ProjectManager = () => (
  <LeftPanel>
    <PanelHeader><Grip />Project manager</PanelHeader>
    <FormTabs role="tablist">
      <svg width="24" height="20" viewBox="0 0 24 20">
        <path d="M0 19.500h3L19 2.500Q21 .5 24 .5V20H0z" fill="#e8e8e8" />
        <path d="M0 19.500h3L19 2.500Q21 .5 24 .5" fill="none" stroke="#7e7e7e" />
      </svg>
      <FormTab role="tab" $on>General</FormTab>
      <FormTab role="tab">Maintenance plan method</FormTab>
      <FormTab role="tab" $grow>Room Surfaces</FormTab>
      <TabArrows>
        <button aria-label="Previous tab"><LeftArrow /></button>
        <button aria-label="Next tab"><RightArrow solid /></button>
      </TabArrows>
    </FormTabs>
    <Form>
      <Label htmlFor="room-name">Name:</Label>
      <Field id="room-name" defaultValue="Room 1" />
      <Label htmlFor="room-desc">Description:</Label>
      <AreaBox>
        <Area id="room-desc" />
        <Scroll>
          <svg width="7" height="10" viewBox="0 0 7 10"><path d="M0 7h7L3.500 3z" fill="#666" /></svg>
          <svg width="7" height="10" viewBox="0 0 7 10"><path d="M0 3h7L3.500 7z" fill="#666" /></svg>
        </Scroll>
      </AreaBox>
    </Form>
    <Tree>
      {nodes.map((n) => (
        <TreeRow key={n.label}>
          <Blank $n={n.depth} />
          <Branch $root={n.depth === 0} $last={n.last}>{n.open && <Expander aria-label="Collapse" />}</Branch>
          <Icon name={n.icon} />
          <NodeLabel $on={n.on}>{n.label}</NodeLabel>
        </TreeRow>
      ))}
    </Tree>
    <BottomTabs role="tablist">
      <svg width="18" height="23" viewBox="0 0 18 23">
        <path d="M0 0h18v22.500Q14 22.500 12 20L0 3z" fill="#dfeaf5" />
        <path d="M0 3l12 17Q14 22.500 18 22.500" fill="none" stroke="#8a8a8a" />
      </svg>
      <BottomTab role="tab" $on><Icon name="project" />Pro...</BottomTab>
      <BottomTab role="tab"><Icon name="table" />Obj...</BottomTab>
      <BottomTab role="tab"><Icon name="texture" />Col...</BottomTab>
      <BottomTab role="tab"><Icon name="torch" />Lu...</BottomTab>
      <BottomTab role="tab"><Icon name="print" />Ou...</BottomTab>
    </BottomTabs>
  </LeftPanel>
);

/* ---------- Centre: document tabs and 3D view ---------- */

const Centre = styled.section`
  display: flex;
  flex-direction: column;
  flex: 1;
  min-width: 0;
  padding-top: 6px;
`;

const DocTabs = styled.div`
  display: flex;
  height: 21px;
  flex: none;
`;

const DocTab = styled.button<{ $on?: boolean; $slanted?: boolean }>`
  display: flex;
  align-items: center;
  gap: 2px;
  height: 21px;
  padding: 0 ${(p) => (p.$slanted && !p.$on ? 10 : 7)}px 0 ${(p) => (p.$slanted ? 0 : 7)}px;
  border: 1px solid #8a8a8a;
  border-left-width: ${(p) => (p.$slanted ? 0 : 1)}px;
  border-bottom: 0;
  border-radius: ${(p) => (p.$slanted ? 0 : 4)}px 4px 0 0;
  margin-left: ${(p) => (p.$slanted ? 0 : -1)}px;
  background: ${(p) => (p.$on ? "linear-gradient(#fdfdfd, #d3e3f4)" : "linear-gradient(#fbfbfb, #ededed)")};
  font-size: 12px;
  font-weight: ${(p) => (p.$on ? 700 : 400)};
`;

const Slant = styled.svg<{ $over?: boolean }>`
  margin-left: ${(p) => (p.$over ? -18 : 0)}px;
  z-index: 1;
`;

const DocTools = styled.div`
  display: flex;
  align-items: center;
  gap: 8px;
  margin-left: auto;
  padding: 0 3px 8px 0;
  height: 21px;
`;

const View = styled.div`
  position: relative;
  display: flex;
  flex: 1;
  min-height: 0;
  margin-bottom: 1px;
  border: 2px solid #8a8f97;
  box-shadow: inset 0 0 0 1px #e6ecf3, inset 0 0 0 2px #5f646c;
  padding: 2px;
  background: #fff;
`;

const Scene = styled.svg`
  flex: 1;
  min-width: 0;
`;

const ContextMenu = styled.div`
  position: absolute;
  left: 269px;
  top: 161px;
  width: 246px;
  padding: 1px;
  border: 1px solid #6a6a6a;
  background: linear-gradient(90deg, #f6f6f6, #dfe0e2 25px, #fafafa 26px);
  box-shadow: 3px 3px 3px rgba(0, 0, 0, 0.5);
`;

const MenuItem = styled.button<{ $on?: boolean; $off?: boolean }>`
  display: grid;
  grid-template-columns: 24px 1fr 40px;
  align-items: center;
  width: 100%;
  height: 22px;
  text-align: left;
  color: ${(p) => (p.$off ? "#8e8e8e" : "#000")};
  outline: ${(p) => (p.$on ? "1px solid #2b6ba8" : "none")};
  outline-offset: -1px;
  background: ${(p) => (p.$on ? "#a0c8f5" : "none")};
`;

const MenuIcon = styled.span<{ $boxed?: boolean }>`
  display: flex;
  align-items: center;
  justify-content: center;
  width: 20px;
  height: 20px;
  margin-left: 2px;
  border: ${(p) => (p.$boxed ? "1px solid #2f78b8" : "0")};
  background: ${(p) => (p.$boxed ? "#d3e8f8" : "none")};
`;

const MenuText = styled.span`
  padding: 0 0 2px 9px;
  white-space: nowrap;
`;

const MenuHint = styled.span`
  display: flex;
  justify-content: space-between;
  align-items: center;
  padding: 0 6px 2px 8px;
`;

const MenuRule = styled.hr`
  height: 1px;
  margin: 1px 0 1px 33px;
  border: 0;
  background: #9b9b9b;
`;

type Entry = { pre?: string; key: string; post?: string; icon?: string; hint?: string; sub?: boolean; on?: boolean; off?: boolean; boxed?: boolean };
const menu: (Entry | null)[] = [
  { pre: "Insert ", key: "L", post: "uminaires", sub: true },
  null,
  { key: "E", post: "dit Room Geometry", icon: "geo" },
  null,
  { pre: "3D S", key: "t", post: "andard View", icon: "cube", hint: "F8" },
  { key: "F", post: "loor Plan (X-Y Level Symbolic)", icon: "plan", hint: "F9" },
  null,
  { pre: "Save ", key: "c", post: "amera view", sub: true },
  { pre: "Redo camera vie", key: "w", sub: true },
  null,
  { key: "S", post: "elect", icon: "cursor", boxed: true },
  { key: "Z", post: "oom", icon: "zoom" },
  { key: "R", post: "otate", icon: "rotate", on: true },
  { pre: "Mo", key: "v", post: "e", icon: "hand" },
  { pre: "Roa", key: "m", icon: "feet" },
  null,
  { key: "P", post: "aste", icon: "paste", off: true },
];

const TabEdge = ({ fill, width, over }: { fill: string; width: number; over?: boolean }) => {
  const line = `M0 21L${width - 5} 2.5Q${width - 3} .5 ${width} .5`;
  return (
    <Slant $over={over} width={width} height="21" viewBox={`0 0 ${width} 21`}>
      <path d={`${line}V21z`} fill={fill} />
      <path d={line} fill="none" stroke="#8a8a8a" />
    </Slant>
  );
};

const Documents = () => (
  <Centre>
    <DocTabs role="tablist">
      <TabEdge fill="#f4f4f4" width={29} />
      <DocTab role="tab" $slanted><Icon name="plan" />Room 1 - Floor plan</DocTab>
      <TabEdge fill="#eaf1f9" width={21} over />
      <DocTab role="tab" $slanted $on><Icon name="cube" />Room 1 - 3D View</DocTab>
      <DocTab role="tab"><Icon name="wire" />Room 1 - Side View (Y-Z Level)</DocTab>
      <DocTab role="tab"><Icon name="front" />Room 1 - Front View (X-Z Level)</DocTab>
      <DocTools>
        <button aria-label="Previous view"><LeftArrow /></button>
        <button aria-label="Next view"><RightArrow /></button>
        <button aria-label="Close view"><CloseMark /></button>
      </DocTools>
    </DocTabs>
    <View>
      <Scene viewBox="350 125 890 686" preserveAspectRatio="xMinYMin meet" aria-label="Room in perspective">
        <path d="M352 335L957 280V312L360 381z" fill="#a9a9a9" />
        <path d="M957 280L1239 318L1232 361L957 312z" fill="#828282" />
        <path d="M360 381L957 312L1232 361L488 509z" fill="#2b2b2b" />
        <path d="M486 485v20" stroke="#ddd" strokeDasharray="3 4" />
        <path d="M484 508l4-4 5 2" fill="none" stroke="#777" />
      </Scene>
      <ContextMenu role="menu">
        {menu.map((m, i) =>
          m === null ? <MenuRule key={i} /> : (
            <MenuItem key={i} role="menuitem" $on={m.on} $off={m.off}>
              <MenuIcon $boxed={m.boxed}>{m.icon && <Icon name={m.icon} />}</MenuIcon>
              <MenuText>{m.pre}<u>{m.key}</u>{m.post}</MenuText>
              <MenuHint>
                <span>{m.hint}</span>
                {m.sub && <svg width="5" height="8" viewBox="0 0 5 8"><path d="M0 0v8l5-4z" fill="#111" /></svg>}
              </MenuHint>
            </MenuItem>
          )
        )}
      </ContextMenu>
    </View>
  </Centre>
);

/* ---------- Right column: the guide ---------- */

const GuidePanel = styled.aside`
  display: flex;
  flex-direction: column;
  width: 188px;
  flex: none;
  margin-left: 4px;
`;

const HeaderTools = styled.div`
  display: flex;
  align-items: center;
  gap: 7px;
  margin-left: auto;
  padding-right: 8px;
`;

const GuideBody = styled.div`
  display: flex;
  flex-direction: column;
  gap: 15px;
  flex: 1;
  min-height: 0;
  padding: 13px 12px 11px;
  background: linear-gradient(#cad6e5, #a9bdd6 45%, #8fa9c9);
`;

const Card = styled.section<{ $open?: boolean }>`
  position: relative;
  flex: ${(p) => (p.$open ? "1 1 0" : "none")};
  min-height: ${(p) => (p.$open ? 120 : 25)}px;
  border-radius: 3px 3px 0 0;
  overflow: hidden;
  background: #ebeef6;
`;

const CardHead = styled.button`
  display: flex;
  align-items: center;
  justify-content: space-between;
  width: 100%;
  height: 25px;
  padding: 0 5px 0 13px;
  background: linear-gradient(90deg, #fff 25%, #ccd7e8);
  color: #17528a;
  font-weight: 700;
  > svg { margin-bottom: 4px; }
`;

const CardBody = styled.div`
  display: flex;
  flex-direction: column;
  gap: 4px;
  padding: 9px 8px 0 13px;
`;

const CardTitle = styled.h3`
  margin: 0;
  font-size: 11px;
  line-height: 15px;
  &:not(:first-child) { margin-top: 4px; }
`;

const GuideLink = styled.a`
  display: flex;
  align-items: flex-start;
  gap: 7px;
  min-height: 16px;
  color: #000;
  text-decoration: none;
  white-space: pre;
`;

const MoreButton = styled.button`
  position: absolute;
  right: 4px;
  bottom: 4px;
  display: flex;
  align-items: center;
  justify-content: center;
  width: 16px;
  height: 16px;
  border: 1px solid #2f78b8;
  background: #e4effa;
`;

const sections: [string, [string, string][]][] = [
  ["Edit room", [["room", "Insert New Room"], ["dxffile", "Load DWG or DXF file"], ["geo", "Edit Room Geometry"], ["column", "Insert ceilings,\nground, and columns"], ["window", "Insert windows and\ndoors"]]],
  ["Insert equipment", [["table", "Place object"], ["texture", "Select Texture"]]],
  ["Plan lighting", [["torch", "Select Luminaires"], ["lumOne", "Insert Single\nLuminaire"], ["lumField", "Insert Luminaire Field"], ["lumLine", "Insert Line"]]],
];
const closed = ["Outdoor Lighting", "Street Lighting", "Light scenes", "Emergency Lighting", "Daylight", "Energy Evaluation", "Sport Site Lighting", "Adjust Guide"];

const Chevron = ({ up }: { up?: boolean }) => (
  <svg width="17" height="17" viewBox="0 0 17 17">
    <circle cx="8.500" cy="8.500" r="7.500" fill="#fdfdfd" stroke="#9aabc0" />
    <path d={up ? "M5.500 8l3-3 3 3M5.500 12l3-3 3 3" : "M5.500 5l3 3 3-3M5.500 9l3 3 3-3"} fill="none" stroke="#1c3f63" strokeWidth="1.500" />
  </svg>
);

const Guide = () => (
  <GuidePanel>
    <PanelHeader>
      <Grip />&nbsp;The Guide
      <HeaderTools>
        <button aria-label="Pin"><svg width="9" height="10" viewBox="0 0 9 10"><path d="M2.500 6V1h4v5M0 6h9M4.500 6v4M5.500 1v5" fill="none" stroke="#111" strokeWidth="1.200" /></svg></button>
        <button aria-label="Close guide"><CloseMark /></button>
      </HeaderTools>
    </PanelHeader>
    <GuideBody>
      <Card $open>
        <CardHead>Indoor Lighting<Chevron up /></CardHead>
        <CardBody>
          {sections.map(([title, links]) => (
            <React.Fragment key={title}>
              <CardTitle>{title}</CardTitle>
              {links.map(([icon, text]) => (
                <GuideLink key={text} href="#"><Icon name={icon} />{text}</GuideLink>
              ))}
            </React.Fragment>
          ))}
        </CardBody>
        <MoreButton aria-label="Scroll down"><svg width="10" height="6" viewBox="0 0 10 6"><path d="M0 0h10L5 5z" fill="#111" /></svg></MoreButton>
      </Card>
      {closed.map((c) => (
        <Card key={c}><CardHead>{c}<Chevron /></CardHead></Card>
      ))}
    </GuideBody>
  </GuidePanel>
);

/* ---------- Status bar ---------- */

const StatusBar = styled.footer`
  display: flex;
  align-items: center;
  height: 18px;
  flex: none;
  padding-top: 2px;
  padding-right: 8px;
  background: #ebebeb;
`;

const StatusCells = styled.div`
  display: flex;
  gap: 14px;
  margin-left: auto;
`;

const Cell = styled.span<{ $wide?: boolean; $off?: boolean }>`
  min-width: ${(p) => (p.$wide ? 54 : 0)}px;
  text-align: right;
  color: ${(p) => (p.$off ? "#707070" : "#000")};
`;

const menus: [string, string, string][] = [
  ["", "F", "ile"], ["", "E", "dit"], ["", "V", "iew"], ["", "C", "AD"], ["P", "i", "ck"], ["", "P", "aste"],
  ["Luminaire ", "S", "election"], ["", "O", "utput"], ["", "W", "indow"], ["O", "n", "line"], ["", "?", ""],
];

export default function App() {
  return (
    <>
      <Global />
      <Window>
        <TitleBar>
          <TitleText>
            <svg width="12" height="13" viewBox="0 0 12 13"><path d="M0 0h12v13H0z" fill="#c3240c" /><path d="M0 0h12L5 6H0z" fill="#f27a3a" /><path d="M2 11l5-6 3 7z" fill="#6e0a04" /></svg>
            DIALux 4.8 - Project 3 - [Room 1 - 3D View]
          </TitleText>
          <WindowButtons>
            <WindowButton aria-label="Minimize"><svg width="11" height="4" viewBox="0 0 11 4"><path d="M0 0h11v4H0z" fill="#eee" /></svg></WindowButton>
            <WindowButton aria-label="Restore"><svg width="10" height="9" viewBox="0 0 10 9"><path d="M1 1h7v7H1z" fill="none" stroke="#eee" strokeWidth="2" /><path d="M3.500 3.500h2v2h-2z" fill="#eee" /></svg></WindowButton>
            <WindowButton $close aria-label="Close"><svg width="10" height="9" viewBox="0 0 10 9"><path d="M1 0l8 8M9 0L1 8" stroke="#fff" strokeWidth="2.200" /></svg></WindowButton>
          </WindowButtons>
        </TitleBar>
        <MenuBar>
          <Grip />
          <MenuLogo><Icon name="cube" /></MenuLogo>
          {menus.map(([a, b, c]) => <MenuButton key={a + b + c}>{a}<u>{b}</u>{c}</MenuButton>)}
          <MdiButtons>
            <button aria-label="Minimize document"><svg width="9" height="9" viewBox="0 0 9 9"><path d="M1 7.500h6" stroke="#111" strokeWidth="2" /></svg></button>
            <button aria-label="Restore document"><svg width="10" height="9" viewBox="0 0 10 9"><path d="M3 3V1h6v4.500H7M1 3.500h6V8H1zM1 4h6" fill="none" stroke="#111" strokeWidth="1.200" /></svg></button>
          </MdiButtons>
        </MenuBar>
        <Tools groups={rowOne} />
        <Tools groups={rowTwo} />
        <Body>
          <ProjectManager />
          <Documents />
          <Guide />
        </Body>
        <StatusBar>
          <span>Activates the rotate view mode.</span>
          <StatusCells>
            <Cell $wide>2.038 m</Cell>
            <Cell $wide>-8.212 m</Cell>
            <Cell $wide>0.000 m</Cell>
            <Cell $off>&nbsp;UF</Cell>
            <Cell>NUM</Cell>
            <Cell $off>SCRL</Cell>
          </StatusCells>
        </StatusBar>
        <Highlight width="136" height="40" viewBox="0 0 136 40">
          <ellipse cx="68" cy="20" rx="64.500" ry="16" fill="none" stroke="#b5141d" strokeWidth="4.500" />
        </Highlight>
        <Gradients />
      </Window>
    </>
  );
}
